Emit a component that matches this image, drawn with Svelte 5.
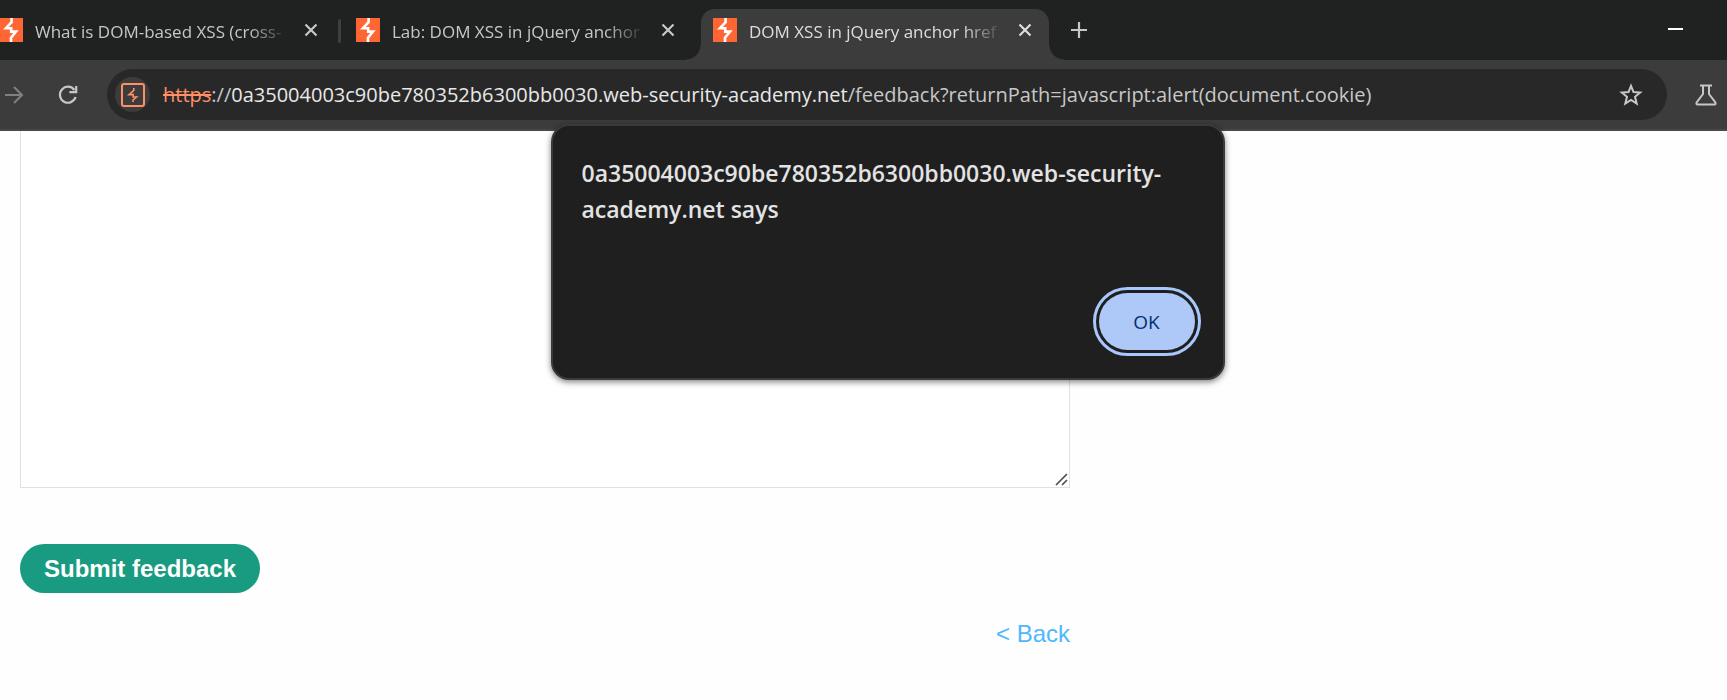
<script>
  const tabs = [
    { title: 'What is DOM-based XSS (cross-', active: false },
    { title: 'Lab: DOM XSS in jQuery anchor', active: false },
    { title: 'DOM XSS in jQuery anchor href', active: true }
  ];
  const host = '0a35004003c90be780352b6300bb0030.web-security-academy.net';
</script>

<header>
  <div class="strip">
    <div class="tabs">
      {#each tabs as tab, i}
        {#if i === 1}<span class="divider"></span>{/if}
        <div class="tab" class:active={tab.active}>
          <svg class="favicon" viewBox="0 0 24 24" aria-hidden="true">
            <rect width="24" height="24" fill="#ff6633" />
            <path d="M12.6 0 V4.2 L7 10.2 H12.2 V13.6 H17 L12 19.8 V24" fill="none" stroke="#fff" stroke-width="2.6" />
          </svg>
          <span class="title">{tab.title}</span>
          <button class="icon" aria-label="Close tab">
            <svg width="14" height="14" viewBox="0 0 14 14"><path d="M1.5 1.5 L12.5 12.5 M12.5 1.5 L1.5 12.5" stroke="currentColor" stroke-width="2.2" /></svg>
          </button>
        </div>
      {/each}
    </div>
    <button class="icon plus" aria-label="New tab">
      <svg width="16" height="16" viewBox="0 0 16 16"><path d="M8 0 V16 M0 8 H16" stroke="currentColor" stroke-width="2.2" /></svg>
    </button>
    <button class="icon minimise" aria-label="Minimise">
      <svg width="16" height="2" viewBox="0 0 16 2"><rect width="15" height="2" fill="#fff" /></svg>
    </button>
  </div>

  <div class="toolbar">
    <button class="icon forward" aria-label="Forward">
      <svg width="20" height="18" viewBox="0 0 20 18"><path d="M1 9 H18 M10 1 L18 9 L10 17" fill="none" stroke="currentColor" stroke-width="2" /></svg>
    </button>
    <button class="icon reload" aria-label="Reload">
      <svg width="20" height="20" viewBox="0 0 20 20"><path d="M16.4 5 A8 8 0 1 0 17.6 12" fill="none" stroke="currentColor" stroke-width="2.2" /><path d="M18.2 1 V7.2 H11.4" fill="none" stroke="currentColor" stroke-width="2.2" /></svg>
    </button>
    <div class="omnibox">
      <button class="icon site" aria-label="Site information">
        <svg width="24" height="24" viewBox="0 0 24 24" fill="none" stroke="#ff8f66">
          <rect x="1" y="1" width="22" height="22" rx="2" stroke-width="2" />
          <path d="M12.8 5 V7.4 L8 11.6 H12.2 V14 H15.6 L12 17 V19" stroke-width="1.6" />
        </svg>
      </button>
      <p class="url"><s>https</s>://<span class="host">{host}</span>/feedback?returnPath=javascript:alert(document.cookie)</p>
      <button class="icon" aria-label="Bookmark this page">
        <svg width="24" height="24" viewBox="0 0 24 24"><path d="M12 2.8 L14.5 9 L21.2 9.5 L16 13.8 L17.7 20.5 L12 16.9 L6.3 20.5 L8 13.8 L2.8 9.5 L9.5 9 Z" fill="none" stroke="currentColor" stroke-width="2" /></svg>
      </button>
    </div>
    <button class="icon flask" aria-label="Labs">
      <svg width="22" height="22" viewBox="0 0 22 22" fill="none" stroke="currentColor" stroke-width="2"><path d="M5 1.5 H17" /><path d="M8 2 V10 L1.6 18.4 Q1 20.5 2.6 20.5 H19.4 Q21 20.5 20.4 18.4 L14 10 V2" /></svg>
    </button>
  </div>
</header>

<main>
  <form>
    <div class="field">
      <textarea aria-label="Message"></textarea>
      <svg class="grip" width="13" height="13" viewBox="0 0 13 13"><path d="M1 12 L12 1 M7 12 L12 7" stroke="#4a4a4a" stroke-width="1.6" /></svg>
    </div>
    <button class="submit" type="button">Submit feedback</button>
    <a class="back" href="#back">&lt; Back</a>
  </form>
</main>

<div class="dialog" role="alertdialog" aria-labelledby="dialog-title">
  <h1 id="dialog-title">{host} says</h1>
  <button class="ok">OK</button>
</div>

<style>
  :global(body) {
    margin: 0;
    background: #fefefe;
  }
  header {
    color: #c7c7c7;
    font-family: 'Open Sans', 'Noto Sans', sans-serif;
  }
  button {
    font: inherit;
    border: 0;
    padding: 0;
    background: none;
    color: inherit;
  }
  .icon {
    display: flex;
    flex: none;
    align-items: center;
    justify-content: center;
    width: 24px;
    height: 24px;
  }
  .strip {
    display: flex;
    align-items: flex-start;
    height: 60px;
    overflow: hidden;
    background: #202221;
  }
  .tabs {
    display: flex;
    gap: 9px;
    margin-left: -13px;
  }
  .tab {
    position: relative;
    display: flex;
    align-items: center;
    box-sizing: border-box;
    width: 348px;
    height: 51px;
    margin-top: 9px;
    padding: 0 12px 9px;
  }
  .active {
    color: #dedede;
    background: #3c3c3c;
    border-radius: 14px 14px 0 0;
  }
  .active::before,
  .active::after {
    content: '';
    position: absolute;
    bottom: 0;
    width: 15px;
    height: 15px;
  }
  .active::before {
    right: 100%;
    background: radial-gradient(circle at 0 0, transparent 14px, #3c3c3c 15px);
  }
  .active::after {
    left: 100%;
    background: radial-gradient(circle at 100% 0, transparent 14px, #3c3c3c 15px);
  }
  .divider {
    width: 3px;
    height: 24px;
    margin: 19px -6px 0;
    border-radius: 2px;
    background: #3e403f;
  }
  .favicon {
    flex: none;
    width: 24px;
    height: 24px;
  }
  .title {
    flex: 1;
    margin: 0 10px 0 12px;
    padding-top: 3px;
    overflow: hidden;
    white-space: nowrap;
    font-size: 17px;
    line-height: 24px;
    mask-image: linear-gradient(to right, #000 84%, transparent);
  }
  .plus {
    margin: 18px 0 0 18px;
  }
  .minimise {
    margin: 17px 39px 0 auto;
  }
  .toolbar {
    display: flex;
    align-items: center;
    box-sizing: border-box;
    height: 71px;
    padding: 0 9px 0 2px;
    background: #3c3c3c;
    border-bottom: 2px solid #484848;
  }
  .forward {
    color: #808080;
  }
  .reload {
    margin: 0 27px 0 30px;
  }
  .omnibox {
    display: flex;
    flex: 1;
    align-items: center;
    box-sizing: border-box;
    min-width: 0;
    height: 51px;
    padding: 0 24px 0 8px;
    border-radius: 26px;
    background: #282828;
  }
  .site {
    width: 35px;
    height: 35px;
    border-radius: 50%;
    background: #3c3c3c;
  }
  .url {
    flex: 1;
    margin: 0 12px 0 13px;
    overflow: hidden;
    white-space: nowrap;
    font-size: 20px;
    line-height: 30px;
  }
  s {
    color: #ff8f66;
  }
  .host {
    color: #e8e8e8;
  }
  .flask {
    margin-left: 27px;
  }
  form {
    display: flex;
    flex-direction: column;
    max-width: 1050px;
    margin: 0 20px;
    font-family: 'Liberation Sans', Arial, sans-serif;
    font-size: 24px;
    line-height: 27px;
  }
  .field {
    position: relative;
    display: flex;
  }
  textarea {
    flex: 1;
    box-sizing: border-box;
    height: 357px;
    border: 1px solid #e1e1e1;
    border-top: 0;
    background: #fff;
    resize: none;
    outline: 0;
  }
  .grip {
    position: absolute;
    right: 2px;
    bottom: 2px;
  }
  .submit {
    align-self: flex-start;
    margin-top: 56px;
    padding: 11px 24px;
    border-radius: 25px;
    background: #189b80;
    color: #fff;
    font-weight: 700;
  }
  .back {
    align-self: flex-end;
    margin-top: 27px;
    color: #4fb8fb;
    text-decoration: none;
  }
  .dialog {
    position: absolute;
    top: 124px;
    left: calc(50% - 313px);
    display: flex;
    flex-direction: column;
    justify-content: space-between;
    box-sizing: border-box;
    width: 674px;
    min-height: 256px;
    padding: 29px 28px 28px 29px;
    border: 2px solid #3a3a3a;
    border-radius: 18px;
    background: #1f1f1f;
    box-shadow: 0 2px 6px rgb(0 0 0 / 50%);
    color: #e3e3e3;
    font-family: 'Open Sans', 'Noto Sans', sans-serif;
  }
  h1 {
    margin: 0;
    font-size: 23px;
    font-weight: 600;
    line-height: 36px;
  }
  .ok {
    align-self: flex-end;
    width: 96px;
    height: 57px;
    border-radius: 29px;
    background: #aec9f7;
    color: #062e6f;
    font-size: 19px;
    font-weight: 500;
    outline: 3px solid #a8c7fa;
    outline-offset: 3px;
  }
</style>
